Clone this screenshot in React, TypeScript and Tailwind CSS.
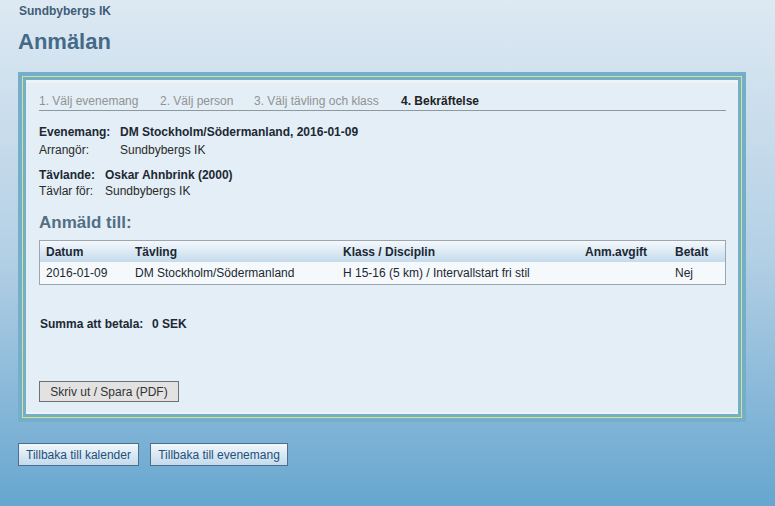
const font = "font-['Liberation_Sans',Arial,sans-serif]";

const tabs = [
  { label: '1. Välj evenemang', active: false, w: 'w-[121px]' },
  { label: '2. Välj person', active: false, w: 'w-[94px]' },
  { label: '3. Välj tävling och klass', active: false, w: 'w-[147px]' },
  { label: '4. Bekräftelse', active: true, w: '' },
];

const cols = ['w-[89px]', 'w-[208px]', 'w-[242px]', 'w-[90px]', 'flex-1'];
const head = ['Datum', 'Tävling', 'Klass / Disciplin', 'Anm.avgift', 'Betalt'];
const row = ['2016-01-09', 'DM Stockholm/Södermanland', 'H 15-16 (5 km) / Intervallstart fri stil', '', 'Nej'];

function NavButton({ children, width }: { children: string; width: string }) {
  return (
    <button
      className={`${width} h-[23px] border border-[#4e6f8c] bg-gradient-to-b from-[#f1f7fc] to-[#c3daec] text-[12px] text-[#24507a] leading-none`}
    >
      {children}
    </button>
  );
}

export default function App() {
  return (
    <div
      className={`${font} min-h-[506px] w-full overflow-hidden bg-gradient-to-b from-[#dde9f3] via-[#b4d0e5] to-[#66a6cf] px-[18px] pt-[4px]`}
    >
      <div className="text-[12px] font-bold leading-[14px] text-[#3f5d76] pl-px">Sundbybergs IK</div>
      <h1 className="mt-[11px] text-[22px] font-bold leading-[26px] text-[#456a87]">Anmälan</h1>

      {/* framed panel */}
      <div className="mt-[17px] w-[728px] border-4 border-[#74aec9]">
        <div className="border border-[#d3e58a]">
          <div className="border-[3px] border-[#74aec9]">
            <div className="border-t-[3px] border-b-[2px] border-[#ecf4fa] bg-[#e3eef6] pl-[13px] pr-[12px] pt-[11px] pb-[10px] text-[12px] text-[#1c2833]">
              <div className="flex border-b border-[#8e989f] pb-[2px] leading-[14px]">
                {tabs.map((t) => (
                  <span key={t.label} className={`${t.w} ${t.active ? 'font-bold text-[#222]' : 'text-[#929292]'}`}>
                    {t.label}
                  </span>
                ))}
              </div>

              <div className="mt-[12px] leading-[18px]">
                <div className="flex font-bold">
                  <span className="w-[81px]">Evenemang:</span>
                  <span>DM Stockholm/Södermanland, 2016-01-09</span>
                </div>
                <div className="flex text-[#2a2a2a]">
                  <span className="w-[81px]">Arrangör:</span>
                  <span>Sundbybergs IK</span>
                </div>
              </div>

              <div className="mt-[8px] leading-[16px]">
                <div className="flex font-bold">
                  <span className="w-[66px]">Tävlande:</span>
                  <span>Oskar Ahnbrink (2000)</span>
                </div>
                <div className="flex text-[#2a2a2a]">
                  <span className="w-[66px]">Tävlar för:</span>
                  <span>Sundbybergs IK</span>
                </div>
              </div>

              <h2 className="mt-[14px] text-[17px] font-bold leading-[20px] text-[#526e84]">Anmäld till:</h2>

              <div className="mt-[7px] border border-[#9aa7b0]">
                <div className="flex h-[21px] items-center bg-gradient-to-b from-[#f4f8fc] to-[#c5dbec] font-bold">
                  {head.map((h, i) => (
                    <div key={h} className={`${cols[i]} pl-[6px]`}>
                      {h}
                    </div>
                  ))}
                </div>
                <div className="flex h-[22px] items-center bg-[#f5f9fc]">
                  {row.map((c, i) => (
                    <div key={i} className={`${cols[i]} pl-[6px]`}>
                      {c}
                    </div>
                  ))}
                </div>
              </div>

              <div className="mt-[31px] flex font-bold leading-[16px] pl-px">
                <span className="w-[112px]">Summa att betala:</span>
                <span>0 SEK</span>
              </div>

              <button className="mt-[49px] h-[21px] w-[140px] border border-[#707070] bg-[#e2e2e2] text-[12px] leading-none text-[#333]">
                Skriv ut / Spara (PDF)
              </button>
            </div>
          </div>
        </div>
      </div>

      <div className="mt-[21px] flex gap-[11px]">
        <NavButton width="w-[121px]">Tillbaka till kalender</NavButton>
        <NavButton width="w-[138px]">Tillbaka till evenemang</NavButton>
      </div>
    </div>
  );
}
